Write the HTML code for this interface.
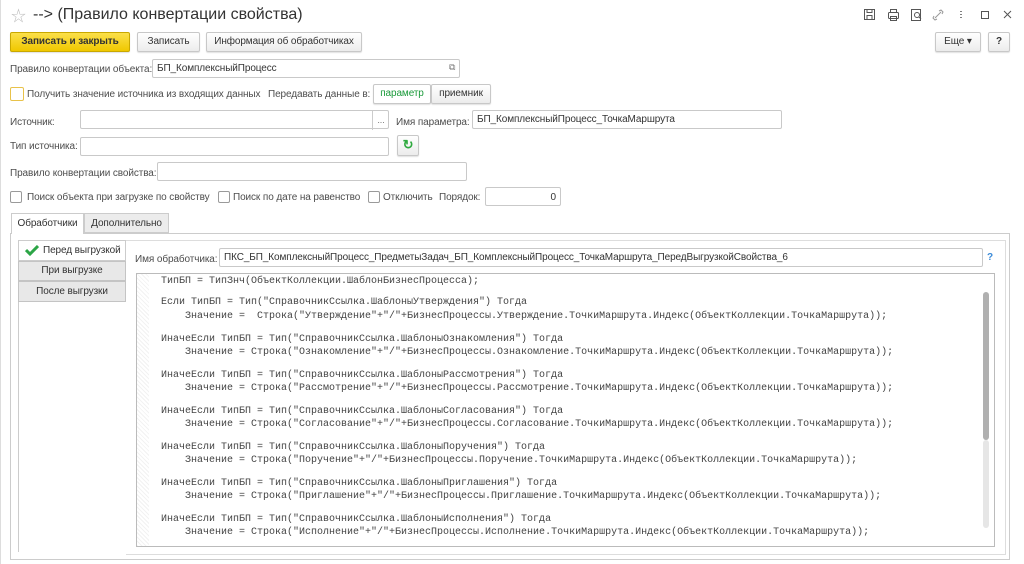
<!DOCTYPE html>
<html><head><meta charset="utf-8"><style>
*{box-sizing:border-box;margin:0;padding:0}
body{width:1024px;height:564px;background:#fff;font-family:"Liberation Sans","Noto Sans CJK SC",sans-serif;font-size:10px;letter-spacing:-0.1px;color:#4d4d4d;position:relative;overflow:hidden}
.a{position:absolute;white-space:nowrap}
.btn{position:absolute;height:20px;border:1px solid #c8c8c8;border-radius:2px;background:linear-gradient(#fff,#ececec);text-align:center;line-height:18px;color:#333;box-shadow:0 1px 1px rgba(0,0,0,.12);white-space:nowrap}
.in{position:absolute;height:19px;border:1px solid #c9c9c9;border-radius:2px;background:#fff;line-height:18px;padding-left:4px;color:#333;white-space:nowrap;overflow:hidden}
.cb{position:absolute;width:12px;height:12px;border:1px solid #9a9a9a;border-radius:2px;background:#fff}
.code{position:absolute;font-family:"Liberation Mono",monospace;font-size:10px;letter-spacing:0;color:#444;white-space:pre;line-height:12px}
</style></head><body>
<div class="a" style="left:0;top:0;width:1px;height:564px;background:#ddd"></div>
<div class="a" style="left:11px;top:5px;font-size:15px;color:#bbb">☆</div>
<div class="a" style="left:33px;top:6px;font-size:16px;letter-spacing:0;color:#333">--&gt; (Правило конвертации свойства)</div>
<svg class="a" style="left:862px;top:8px" width="160" height="14" viewBox="0 0 160 14" fill="none" stroke="#555" stroke-width="1">
<rect x="2.5" y="1.5" width="10" height="10"/><rect x="5" y="1.5" width="5" height="3"/><rect x="5" y="7.5" width="5" height="4"/>
<rect x="26.5" y="4.5" width="10" height="6" rx="1"/><rect x="28.5" y="1.5" width="6" height="3"/><rect x="28.5" y="8.5" width="6" height="4"/>
<rect x="49.5" y="1.5" width="9" height="11"/><circle cx="55" cy="7" r="2.5"/><path d="M57 9l2 2"/>
<path d="M73 10l6-6M72 8l-1 2 2 2 2-1M80 6l1-2-2-2-2 1" stroke="#999"/>
<path d="M99 3v1M99 6v1M99 9v1" stroke-width="1.5"/>
<rect x="119.5" y="3.5" width="7" height="7"/>
<path d="M142 3l7 7M149 3l-7 7"/>
</svg>
<div class="btn" style="left:10px;top:32px;width:120px;background:linear-gradient(#fbe04a,#f0c800);border-color:#c9a800;font-weight:bold;color:#333">Записать и закрыть</div>
<div class="btn" style="left:137px;top:32px;width:63px">Записать</div>
<div class="btn" style="left:206px;top:32px;width:156px">Информация об обработчиках</div>
<div class="btn" style="left:935px;top:32px;width:46px">Еще ▾</div>
<div class="btn" style="left:988px;top:32px;width:22px;font-weight:bold">?</div>
<div class="a" style="left:10px;top:64px">Правило конвертации объекта:</div>
<div class="in" style="left:152px;top:59px;width:308px">БП_КомплексныйПроцесс</div>
<div class="a" style="left:449px;top:62px;font-size:9px;color:#777">⧉</div>
<div class="cb" style="left:10px;top:87px;border-color:#e8c24a;width:14px;height:14px"></div>
<div class="a" style="left:27px;top:89px">Получить значение источника из входящих данных</div>
<div class="a" style="left:268px;top:89px">Передавать данные в:</div>
<div class="btn" style="left:373px;top:84px;width:58px;color:#1a9a3a;background:#fff">параметр</div>
<div class="btn" style="left:431px;top:84px;width:60px">приемник</div>
<div class="a" style="left:10px;top:117px">Источник:</div>
<div class="in" style="left:80px;top:110px;width:309px"></div>
<div class="a" style="left:372px;top:111px;width:17px;height:19px;border-left:1px solid #ccc;text-align:center;font-size:9px;line-height:19px;color:#777">...</div>
<div class="a" style="left:396px;top:117px">Имя параметра:</div>
<div class="in" style="left:472px;top:110px;width:310px">БП_КомплексныйПроцесс_ТочкаМаршрута</div>
<div class="a" style="left:10px;top:141px">Тип источника:</div>
<div class="in" style="left:80px;top:137px;width:309px"></div>
<div class="btn" style="left:397px;top:135px;width:22px;height:21px;color:#2faa3f;font-weight:bold;font-size:13px">↻</div>
<div class="a" style="left:10px;top:168px">Правило конвертации свойства:</div>
<div class="in" style="left:157px;top:162px;width:310px"></div>
<div class="cb" style="left:10px;top:191px"></div><div class="a" style="left:27px;top:192px">Поиск объекта при загрузке по свойству</div>
<div class="cb" style="left:218px;top:191px"></div><div class="a" style="left:233px;top:192px">Поиск по дате на равенство</div>
<div class="cb" style="left:368px;top:191px"></div><div class="a" style="left:383px;top:192px">Отключить</div>
<div class="a" style="left:439px;top:192px">Порядок:</div>
<div class="in" style="left:485px;top:187px;width:76px;text-align:right;padding-right:4px;line-height:19px">0</div>
<div class="a" style="left:10px;top:233px;width:1000px;height:327px;border:1px solid #ccc"></div>
<div class="a" style="left:11px;top:213px;width:73px;height:21px;background:#fff;border:1px solid #ccc;border-bottom:none;text-align:center;line-height:20px;color:#333">Обработчики</div>
<div class="a" style="left:84px;top:213px;width:85px;height:20px;background:#ececec;border:1px solid #ccc;text-align:center;line-height:19px;color:#333">Дополнительно</div>
<div class="a" style="left:18px;top:240px;width:108px;height:21px;border:1px solid #ccc;background:#fff;line-height:19px;padding-left:24px;color:#333">Перед выгрузкой</div>
<svg class="a" style="left:25px;top:245px" width="14" height="11"><path d="M1 5l4 4 8-8" stroke="#2ca546" stroke-width="3" fill="none"/></svg>
<div class="a" style="left:18px;top:261px;width:108px;height:20px;border:1px solid #c4c4c4;background:#e8e8e8;line-height:18px;text-align:center;color:#333">При выгрузке</div>
<div class="a" style="left:18px;top:281px;width:108px;height:21px;border:1px solid #c4c4c4;background:#e8e8e8;line-height:19px;text-align:center;color:#333">После выгрузки</div>
<div class="a" style="left:18px;top:302px;width:1px;height:250px;background:#ccc"></div>
<div class="a" style="left:126px;top:240px;width:880px;height:315px;border:1px solid #ddd;border-left:none"></div>
<div class="a" style="left:135px;top:254px">Имя обработчика:</div>
<div class="in" style="left:219px;top:248px;width:764px">ПКС_БП_КомплексныйПроцесс_ПредметыЗадач_БП_КомплексныйПроцесс_ТочкаМаршрута_ПередВыгрузкойСвойства_6</div>
<div class="a" style="left:987px;top:252px;color:#3a8ad8;font-weight:bold">?</div>
<div class="a" style="left:136px;top:273px;width:859px;height:274px;border:1px solid #bbb;background:#fff"></div>
<div class="a" style="left:137px;top:274px;width:12px;height:272px;background:repeating-linear-gradient(45deg,#f2f2f2 0 1px,#fff 1px 3px)"></div>
<div class="a" style="left:983px;top:292px;width:6px;height:148px;border-radius:3px;background:#b0b0b0"></div>
<div class="a" style="left:983px;top:440px;width:6px;height:88px;border-radius:3px;background:#e6e6e6"></div>
<div class="code" style="left:161px;top:276px">ТипБП = ТипЗнч(ОбъектКоллекции.ШаблонБизнесПроцесса);</div>
<div class="code" style="left:161px;top:297px">Если ТипБП = Тип("СправочникСсылка.ШаблоныУтверждения") Тогда</div>
<div class="code" style="left:161px;top:311px">    Значение =  Строка("Утверждение"+"/"+БизнесПроцессы.Утверждение.ТочкиМаршрута.Индекс(ОбъектКоллекции.ТочкаМаршрута));</div>
<div class="code" style="left:161px;top:334px">ИначеЕсли ТипБП = Тип("СправочникСсылка.ШаблоныОзнакомления") Тогда</div>
<div class="code" style="left:161px;top:347px">    Значение = Строка("Ознакомление"+"/"+БизнесПроцессы.Ознакомление.ТочкиМаршрута.Индекс(ОбъектКоллекции.ТочкаМаршрута));</div>
<div class="code" style="left:161px;top:370px">ИначеЕсли ТипБП = Тип("СправочникСсылка.ШаблоныРассмотрения") Тогда</div>
<div class="code" style="left:161px;top:383px">    Значение = Строка("Рассмотрение"+"/"+БизнесПроцессы.Рассмотрение.ТочкиМаршрута.Индекс(ОбъектКоллекции.ТочкаМаршрута));</div>
<div class="code" style="left:161px;top:406px">ИначеЕсли ТипБП = Тип("СправочникСсылка.ШаблоныСогласования") Тогда</div>
<div class="code" style="left:161px;top:419px">    Значение = Строка("Согласование"+"/"+БизнесПроцессы.Согласование.ТочкиМаршрута.Индекс(ОбъектКоллекции.ТочкаМаршрута));</div>
<div class="code" style="left:161px;top:442px">ИначеЕсли ТипБП = Тип("СправочникСсылка.ШаблоныПоручения") Тогда</div>
<div class="code" style="left:161px;top:455px">    Значение = Строка("Поручение"+"/"+БизнесПроцессы.Поручение.ТочкиМаршрута.Индекс(ОбъектКоллекции.ТочкаМаршрута));</div>
<div class="code" style="left:161px;top:478px">ИначеЕсли ТипБП = Тип("СправочникСсылка.ШаблоныПриглашения") Тогда</div>
<div class="code" style="left:161px;top:491px">    Значение = Строка("Приглашение"+"/"+БизнесПроцессы.Приглашение.ТочкиМаршрута.Индекс(ОбъектКоллекции.ТочкаМаршрута));</div>
<div class="code" style="left:161px;top:514px">ИначеЕсли ТипБП = Тип("СправочникСсылка.ШаблоныИсполнения") Тогда</div>
<div class="code" style="left:161px;top:527px">    Значение = Строка("Исполнение"+"/"+БизнесПроцессы.Исполнение.ТочкиМаршрута.Индекс(ОбъектКоллекции.ТочкаМаршрута));</div>
</body></html>
